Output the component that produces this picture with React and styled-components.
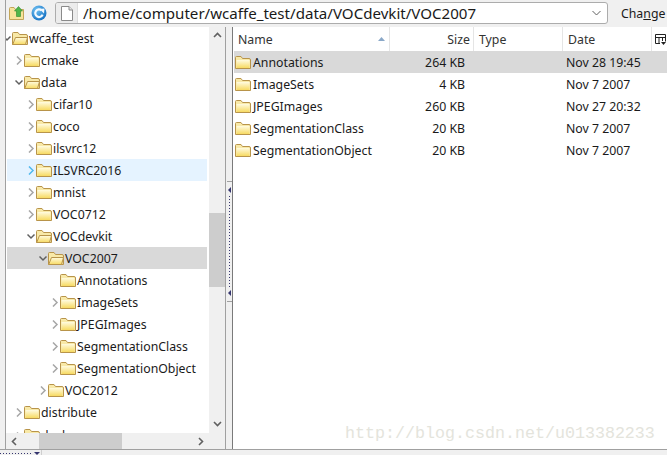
import { useState } from 'react'
import styled, { createGlobalStyle } from 'styled-components'

const Global = createGlobalStyle`
  html, body { margin: 0; padding: 0; background: #f0f0f0; }
  body { font-family: "Noto Sans", "Open Sans", sans-serif; font-size: 12.3px; color: #1a1a1a; }
`

const Window = styled.div`
  position: relative;
  width: 667px;
  height: 455px;
  overflow: hidden;
  display: grid;
  grid-template-rows: 27px 422px 6px;
`

const Toolbar = styled.div`
  display: flex;
  align-items: center;
  margin-left: 5px;
  border-left: 1px solid #a0a0a0;
  padding: 2px 0 3px 3px;
`

const ToolIcon = styled.svg`
  width: 16px;
  height: 16px;
  margin-right: ${p => p.$gap}px;
  flex: none;
`

const AddressBox = styled.div`
  width: 553px;
  height: 22px;
  box-sizing: border-box;
  border: 1px solid #acacac;
  border-radius: 3px;
  background: #fff;
  display: flex;
  align-items: center;
  flex: none;
`

const PathIcon = styled.div`
  width: 21px;
  height: 20px;
  background: #ececec;
  display: flex;
  align-items: center;
  justify-content: center;
  margin-right: 5px;
  border-right: 1px solid #dcdcdc;
  border-radius: 2px 0 0 2px;
`

const PathText = styled.span`
  flex: 1;
  white-space: nowrap;
  font-size: 15.1px;
`

const DropArrow = styled.svg`
  width: 9px;
  height: 6px;
  margin-right: 6px;
`

const ChangeButton = styled.span`
  margin-left: 13px;
  font-size: 12.3px;
  & u { text-underline-offset: 1px; }
`

const Panes = styled.div`
  display: grid;
  grid-template-columns: 5px 1px 203px 16px 1px 6px 1px 1fr;
  min-height: 0;
`

const Rule = styled.div`
  background: ${p => p.$dark ? '#7a7a7a' : '#a0a0a0'};
`

const TreePane = styled.div`
  grid-column: span 2;
  display: grid;
  grid-template-columns: 203px 16px;
  grid-template-rows: 406px 16px;
  min-height: 0;
`

const TreeBody = styled.div`
  background: #fff;
  overflow: hidden;
`

const TreeRow = styled.div`
  height: 22px;
  width: 200px;
  margin-left: 1px;
  display: flex;
  align-items: center;
  padding-left: ${p => p.$depth * 12}px;
  padding-top: ${p => p.$drop || 0}px;
  box-sizing: border-box;
  white-space: nowrap;
  background: ${p => p.$state === 'selected' ? '#d9d9d9' : p.$state === 'hover' ? '#e5f3ff' : 'transparent'};
`

const ChevronBox = styled.svg`
  width: 9px;
  height: 9px;
  margin-left: -4px;
  margin-top: 1px;
  flex: none;
  visibility: ${p => p.$hidden ? 'hidden' : 'visible'};
`

const FolderBox = styled.svg`
  width: 16px;
  height: 15px;
  flex: none;
  margin-right: 1px;
`

const VBar = styled.div`
  background: #f0f0f0;
  display: grid;
  grid-template-rows: 16px 170px 74px 1fr 16px;
`

const HBar = styled.div`
  background: #f0f0f0;
  display: grid;
  grid-template-columns: 16px 17px 83px 1fr 16px;
`

const Thumb = styled.div`
  background: #cdcdcd;
`

const BarButton = styled.div`
  display: flex;
  align-items: center;
  justify-content: center;
  padding-bottom: ${p => p.$lift || 0}px;
  box-sizing: border-box;
`

const Corner = styled.div`
  background: #f0f0f0;
`

const Splitter = styled.div`
  background: #f0f0f0;
  display: flex;
  flex-direction: column;
  align-items: center;
  padding-top: 154px;
`

const GripBar = styled.div`
  width: 5px;
  height: 1px;
  background: #a0a0a0;
`

const GripArrow = styled.div`
  width: 0;
  height: 0;
  margin: ${p => p.$top ? '5px 0 3px 0' : '3px 0 5px 0'};
  border-top: 3px solid transparent;
  border-bottom: 3px solid transparent;
  border-right: 3px solid #35356f;
`

const GripDots = styled.div`
  width: 1px;
  height: 91px;
  background: repeating-linear-gradient(to bottom, #35356f 0 1px, transparent 1px 3px);
`

const ListPane = styled.div`
  background: #fff;
  min-width: 0;
`

const Header = styled.div`
  height: 24px;
  display: grid;
  grid-template-columns: 157px 84px 89px 89px 1fr;
  align-items: stretch;
`

const HeaderCell = styled.div`
  display: flex;
  align-items: center;
  justify-content: ${p => p.$right ? 'flex-end' : 'flex-start'};
  padding: ${p => p.$right ? '0 3px 0 0' : '0 0 0 5px'};
  border-right: ${p => p.$last ? 0 : '1px solid #e5e5e5'};
  color: #333;
`

const NameCell = styled(HeaderCell)`
  justify-content: space-between;
  padding-right: 4px;
`

const SortArrow = styled.svg`
  width: 7px;
  height: 4px;
`

const ColumnsIcon = styled.svg`
  width: 11px;
  height: 11px;
  margin-left: -2px;
`

const Row = styled.div`
  height: 22px;
  margin-left: 1px;
  display: grid;
  grid-template-columns: 156px 84px 89px 1fr;
  align-items: center;
  white-space: nowrap;
  background: ${p => p.$selected ? '#d9d9d9' : 'transparent'};
`

const NameWrap = styled.div`
  display: flex;
  align-items: center;
  gap: 1px;
  padding-left: 1px;
`

const SizeCell = styled.div`
  text-align: right;
  padding-right: 9px;
`

const DateCell = styled.div`
  grid-column: 4;
  padding-left: 3px;
`

const StatusStrip = styled.div`
  display: flex;
  align-items: flex-start;
  border-top: 1px solid #a0a0a0;
  box-sizing: border-box;
`

const StatusDots = styled.div`
  width: 31px;
  height: 1px;
  margin-top: 3px;
  background: repeating-linear-gradient(to right, #35356f 0 1px, transparent 1px 3px);
`

const StatusArrow = styled.div`
  width: 0;
  height: 0;
  margin: 2px 0 0 3px;
  border-left: 3px solid transparent;
  border-right: 3px solid transparent;
  border-top: 3px solid #35356f;
`

const StatusLine = styled.div`
  width: 1px;
  height: 5px;
  margin-left: 1px;
  background: #cfcfcf;
`

const Watermark = styled.div`
  position: absolute;
  left: 345px;
  top: 424px;
  font-family: "Liberation Mono", monospace;
  font-size: 16.67px;
  line-height: 19px;
  color: #e4e4dc;
  pointer-events: none;
`

function Chevron({ dir, color = '#a6a6a6', hidden }) {
  const d = dir === 'down' ? 'M0.5 2.5 L4 6 L7.5 2.5' : 'M2 0.5 L6 4.5 L2 8.5'
  return (
    <ChevronBox viewBox="0 0 9 9" $hidden={hidden}>
      <path d={d} fill="none" stroke={color} strokeWidth="1.5" />
    </ChevronBox>
  )
}

function Folder({ open, id }) {
  return (
    <FolderBox viewBox="0 0 16 15">
      <defs>
        <linearGradient id={id} x1="0" y1="0" x2="0" y2="1">
          <stop offset="0" stopColor="#fffbe0" />
          <stop offset="1" stopColor="#f7da62" />
        </linearGradient>
      </defs>
      <path d="M0.5 13.5 V2.5 Q0.5 1.5 1.5 1.5 H6 L7.5 3.5 H14 Q15.5 3.5 15.5 5 V13.5 Z" fill="#f8e9a8" stroke="#b8944a" />
      {open
        ? <path d="M0.7 13.5 L3.5 6.5 H15.5 L13.5 13.5 Z" fill={`url(#${id})`} stroke="#b8944a" />
        : <rect x="1.5" y="5" width="13" height="8" fill={`url(#${id})`} />}
    </FolderBox>
  )
}

function Tool({ type }) {
  if (type === 'up') {
    return (
      <ToolIcon viewBox="0 0 16 16" $gap={6}>
        <path d="M0.5 14.5 V3.5 Q0.5 2.5 1.5 2.5 H5 L6.5 4.5 H14.5 V14.5 Z" fill="#f6e39a" stroke="#c2a558" />
        <path d="M9.5 1.5 L13.5 6 H11.5 V11.5 H7.5 V6 H5.5 Z" fill="#4fb64a" stroke="#2f8a2c" strokeWidth="0.6" />
      </ToolIcon>
    )
  }
  return (
    <ToolIcon viewBox="0 0 16 16" $gap={8}>
      <defs>
        <radialGradient id="refresh-ball" cx="0.35" cy="0.3" r="0.8">
          <stop offset="0" stopColor="#6fc0f2" />
          <stop offset="1" stopColor="#0f6cc0" />
        </radialGradient>
      </defs>
      <circle cx="8" cy="8" r="7.5" fill="url(#refresh-ball)" />
      <path d="M10.6 5.4 A3.8 3.8 0 1 0 11.6 9.6" fill="none" stroke="#f2f9ff" strokeWidth="2.2" />
      <path d="M8.5 4 L13.5 3.5 L13 8.5 Z" fill="#f2f9ff" />
    </ToolIcon>
  )
}

const treeRows = [
  { name: 'wcaffe_test', depth: 0, open: true, chev: 'down' },
  { name: 'cmake', depth: 1, chev: 'right' },
  { name: 'data', depth: 1, open: true, chev: 'down' },
  { name: 'cifar10', depth: 2, chev: 'right' },
  { name: 'coco', depth: 2, chev: 'right' },
  { name: 'ilsvrc12', depth: 2, chev: 'right' },
  { name: 'ILSVRC2016', depth: 2, chev: 'right', state: 'hover' },
  { name: 'mnist', depth: 2, chev: 'right' },
  { name: 'VOC0712', depth: 2, chev: 'right' },
  { name: 'VOCdevkit', depth: 2, open: true, chev: 'down' },
  { name: 'VOC2007', depth: 3, open: true, chev: 'down', state: 'selected' },
  { name: 'Annotations', depth: 4 },
  { name: 'ImageSets', depth: 4, chev: 'right' },
  { name: 'JPEGImages', depth: 4, chev: 'right' },
  { name: 'SegmentationClass', depth: 4, chev: 'right' },
  { name: 'SegmentationObject', depth: 4, chev: 'right' },
  { name: 'VOC2012', depth: 3, chev: 'right' },
  { name: 'distribute', depth: 1, chev: 'right' },
  { name: 'docker', depth: 1, chev: 'right', drop: 3 },
]

const files = [
  { name: 'Annotations', size: '264 KB', date: 'Nov 28 19:45', selected: true },
  { name: 'ImageSets', size: '4 KB', date: 'Nov 7 2007' },
  { name: 'JPEGImages', size: '260 KB', date: 'Nov 27 20:32' },
  { name: 'SegmentationClass', size: '20 KB', date: 'Nov 7 2007' },
  { name: 'SegmentationObject', size: '20 KB', date: 'Nov 7 2007' },
]

export default function App() {
  const [path] = useState('/home/computer/wcaffe_test/data/VOCdevkit/VOC2007')

  return (
    <Window>
      <Global />
      <Toolbar>
        <Tool type="up" />
        <Tool type="refresh" />
        <AddressBox>
          <PathIcon>
            <svg width="12" height="15" viewBox="0 0 12 15">
              <path d="M0.5 0.5 H8 L11.5 4 V14.5 H0.5 Z" fill="#fff" stroke="#8a8a8a" />
              <path d="M8 0.5 V4 H11.5" fill="#e6e6e6" stroke="#8a8a8a" />
            </svg>
          </PathIcon>
          <PathText>{path}</PathText>
          <DropArrow viewBox="0 0 9 6">
            <path d="M0.5 1 L4.5 5 L8.5 1" fill="none" stroke="#606060" />
          </DropArrow>
        </AddressBox>
        <ChangeButton>Cha<u>n</u>ge</ChangeButton>
      </Toolbar>

      <Panes>
        <div />
        <Rule />
        <TreePane>
          <TreeBody>
            {treeRows.map((r, i) => (
              <TreeRow key={r.name} $depth={r.depth} $state={r.state} $drop={r.drop}>
                <Chevron
                  dir={r.chev}
                  hidden={!r.chev}
                  color={r.state === 'hover' ? '#4fb8ee' : r.chev === 'down' ? '#606060' : '#a6a6a6'}
                />
                <Folder open={r.open} id={`tree-${i}`} />
                {r.name}
              </TreeRow>
            ))}
          </TreeBody>
          <VBar>
            <BarButton>
              <svg width="9" height="6" viewBox="0 0 9 6"><path d="M1 5 L4.5 1.5 L8 5" fill="none" stroke="#606060" strokeWidth="1.6" /></svg>
            </BarButton>
            <div />
            <Thumb />
            <div />
            <BarButton $lift={3}>
              <svg width="9" height="6" viewBox="0 0 9 6"><path d="M1 1 L4.5 4.5 L8 1" fill="none" stroke="#606060" strokeWidth="1.6" /></svg>
            </BarButton>
          </VBar>
          <HBar>
            <BarButton>
              <svg width="6" height="9" viewBox="0 0 6 9"><path d="M5 1 L1.5 4.5 L5 8" fill="none" stroke="#606060" strokeWidth="1.6" /></svg>
            </BarButton>
            <div />
            <Thumb />
            <div />
            <BarButton>
              <svg width="6" height="9" viewBox="0 0 6 9"><path d="M1 1 L4.5 4.5 L1 8" fill="none" stroke="#606060" strokeWidth="1.6" /></svg>
            </BarButton>
          </HBar>
          <Corner />
        </TreePane>
        <Rule />
        <Splitter>
          <GripBar />
          <GripArrow $top />
          <GripDots />
          <GripArrow />
          <GripBar />
        </Splitter>
        <Rule $dark />
        <ListPane>
          <Header>
            <NameCell>
              Name
              <SortArrow viewBox="0 0 7 4"><path d="M3.5 0 L7 4 H0 Z" fill="#8aa8c8" /></SortArrow>
            </NameCell>
            <HeaderCell $right>Size</HeaderCell>
            <HeaderCell>Type</HeaderCell>
            <HeaderCell>Date</HeaderCell>
            <HeaderCell $last>
              <ColumnsIcon viewBox="0 0 11 11">
                <path d="M0.5 0.5 H10.5 V7.5 M0.5 0.5 V9.5 H5 M0.5 3.5 H10.5 M4 3.5 V9.5 M7.5 3.5 V7" fill="none" stroke="#222" />
                <path d="M6 8 H11 L8.5 11 Z" fill="#222" />
              </ColumnsIcon>
            </HeaderCell>
          </Header>
          {files.map((f, i) => (
            <Row key={f.name} $selected={f.selected}>
              <NameWrap>
                <Folder id={`file-${i}`} />
                <span>{f.name}</span>
              </NameWrap>
              <SizeCell>{f.size}</SizeCell>
              <DateCell>{f.date}</DateCell>
            </Row>
          ))}
        </ListPane>
      </Panes>

      <StatusStrip>
        <StatusDots />
        <StatusArrow />
        <StatusLine />
      </StatusStrip>

      <Watermark>http://blog.csdn.net/u013382233</Watermark>
    </Window>
  )
}
